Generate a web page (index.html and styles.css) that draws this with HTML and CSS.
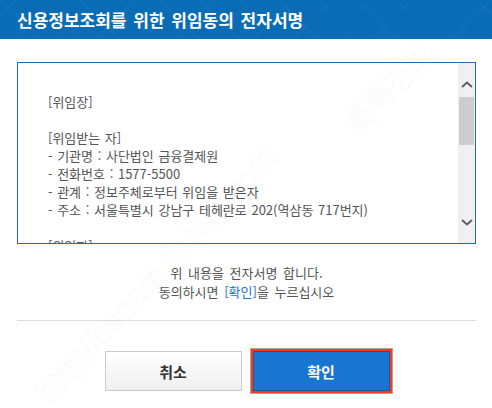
FILE: index.html
```html
<!DOCTYPE html>
<html lang="ko">
<head>
    <meta charset="UTF-8">
    <title>신용정보조회를 위한 위임동의 전자서명</title>
    <link rel="stylesheet" href="styles.css">
</head>
<body>
    <div class="popup">
        <div class="popup-header">신용정보조회를 위한 위임동의 전자서명</div>

        <div class="popup-body">
            <div class="terms-box">
                <div class="terms-text">
                    <p>[위임장]</p>
                    <p>&nbsp;</p>
                    <p>[위임받는 자]</p>
                    <p>- 기관명 : 사단법인 금융결제원</p>
                    <p>- 전화번호 : 1577-5500</p>
                    <p>- 관계 : 정보주체로부터 위임을 받은자</p>
                    <p>- 주소 : 서울특별시 강남구 테헤란로 202(역삼동 717번지)</p>
                    <p>&nbsp;</p>
                    <p>[위임자]</p>
                    <p>- 성명 : </p>
                </div>
                <div class="scrollbar">
                    <div class="scroll-btn up">
                        <svg width="12" height="7" viewBox="0 0 12 7"><path d="M1 6 L6 1.5 L11 6" fill="none" stroke="#606060" stroke-width="2"/></svg>
                    </div>
                    <div class="scroll-thumb"></div>
                    <div class="scroll-btn down">
                        <svg width="12" height="7" viewBox="0 0 12 7"><path d="M1 1 L6 5.5 L11 1" fill="none" stroke="#606060" stroke-width="2"/></svg>
                    </div>
                </div>
            </div>

            <div class="notice">
                위 내용을 전자서명 합니다.<br>
                동의하시면 <span class="hl">[확인]</span>을 누르십시오
            </div>

            <div class="divider"></div>

            <div class="btn-row">
                <button class="btn btn-cancel">취소</button>
                <button class="btn btn-ok">확인</button>
            </div>
        </div>

        <!-- 워터마크 -->
        <div class="wm wm-url">http://ssnam.tistory.com</div>
        <div class="wm wm-name">톡톡정보</div>
    </div>
</body>
</html>
```

FILE: styles.css
```css
:root {
    --blue: #0b6cb6;
    --text: #555555;
    --link: #1a73c8;
}

* {
    margin: 0;
    padding: 0;
    box-sizing: border-box;
}

body {
    font-family: "Noto Sans CJK KR", "Noto Sans", sans-serif;
    background: #ffffff;
    color: var(--text);
}

.popup {
    position: relative;
    width: 492px;
    height: 408px;
    overflow: hidden;
}

.popup-header {
    height: 39px;
    line-height: 39px;
    padding-left: 17px;
    background-color: var(--blue);
    background-image:
        repeating-linear-gradient(45deg, rgba(255, 255, 255, 0.03) 0 1px, transparent 1px 28px),
        repeating-linear-gradient(-45deg, rgba(255, 255, 255, 0.03) 0 1px, transparent 1px 28px);
    color: #ffffff;
    font-size: 17px;
    font-weight: bold;
    word-spacing: 2px;
}

.popup-body {
    padding: 23px 16px 0 17px;
}

.terms-box {
    display: flex;
    height: 182px;
    border: 1px solid #1d6fb8;
}

.terms-text {
    flex: 1;
    overflow: hidden;
    padding: 30px 0 0 30px;
    font-size: 13px;
    line-height: 18px;
    word-spacing: 1px;
    color: var(--text);
}

.scrollbar {
    width: 17px;
    display: flex;
    flex-direction: column;
    background: #f0f0f0;
}

.scroll-btn {
    height: 34px;
    display: flex;
    justify-content: center;
}

.scroll-btn.up svg {
    margin-top: 18px;
}

.scroll-btn.down {
    margin-top: auto;
}

.scroll-btn.down svg {
    margin-top: 10px;
}

.scroll-thumb {
    height: 48px;
    background: #cdcdcd;
    margin: 0 1px;
}

.notice {
    margin-top: 19px;
    text-align: center;
    font-size: 13px;
    line-height: 19px;
    word-spacing: 2px;
}

.notice .hl {
    color: var(--link);
}

.divider {
    margin-top: 19px;
    height: 1px;
    background: #dddddd;
}

.btn-row {
    display: flex;
    justify-content: center;
    gap: 11px;
    margin-top: 30px;
    padding-left: 1px;
}

.btn {
    width: 137px;
    height: 40px;
    font-family: inherit;
    font-size: 15px;
    font-weight: bold;
    cursor: pointer;
}

.btn-cancel {
    background: linear-gradient(#ffffff, #efefef);
    border: 1px solid #cccccc;
    color: #333333;
}

.btn-ok {
    background: #1976d0;
    border: 1px solid #15599c;
    color: #ffffff;
    outline: 2px solid #ff3a12;
    box-shadow: 0 0 0 3px #a8a8a8;
}

.wm {
    position: absolute;
    pointer-events: none;
    white-space: nowrap;
    color: transparent;
    -webkit-text-stroke: 1px rgba(0, 0, 0, 0.045);
    transform-origin: 0 0;
    transform: rotate(-47deg);
}

.wm-url {
    left: 28px;
    top: 385px;
    font-family: "Liberation Sans", sans-serif;
    font-size: 32px;
}

.wm-name {
    left: 335px;
    top: 112px;
    font-size: 30px;
}
```
